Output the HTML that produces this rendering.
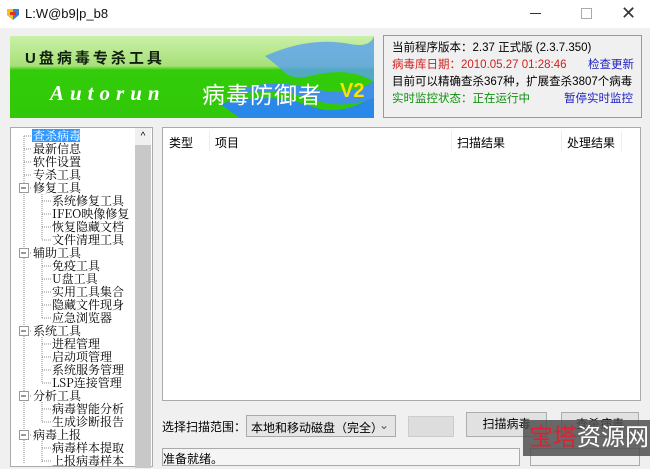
<!DOCTYPE html>
<html><head><meta charset="utf-8"><style>
*{margin:0;padding:0;box-sizing:border-box}
body{width:650px;height:463px;overflow:hidden;background:#f0f0f0;font-family:"Liberation Sans","Noto Sans CJK SC",sans-serif;font-size:12px;position:relative;color:#000}
.a{position:absolute}
.title{left:0;top:0;width:650px;height:28px;background:#fff}
.tree div{position:absolute;white-space:nowrap;font-family:"Noto Serif CJK SC","Noto Sans CJK SC",serif;font-size:12px;line-height:13px}
</style></head><body>
<div class="a title">
 <svg class="a" style="left:6px;top:7px" width="14" height="14"><path d="M1 2h12v6l-6 5-6-5z" fill="#3a7ad8"/><path d="M1 2h6v11l-6-5z" fill="#f0c020"/><path d="M4 5h6v3H4z" fill="#e03020"/></svg>
 <div class="a" style="left:25px;top:6px;font-size:13px;color:#111">L:W@b9|p_b8</div>
 <div class="a" style="left:530px;top:13px;width:11px;height:1px;background:#333"></div>
 <div class="a" style="left:581px;top:8px;width:11px;height:11px;border:1px solid #aaa"></div>
 <div class="a" style="left:621px;top:3px;font-size:18px;color:#333">✕</div>
</div>
<div class="a" style="left:10px;top:36px;width:364px;height:82px;overflow:hidden;background:linear-gradient(#c9f0a8 0,#a8e078 30px,#33cc0a 34px,#30c808 82px)">
 <svg class="a" style="left:0;top:0" width="364" height="82"><path d="M255 20 Q300 0 340 8 Q360 12 364 0 V46 Q340 30 300 40 Q280 45 270 32z" fill="#5aa0f0" opacity=".8"/><path d="M210 68 Q260 55 300 70 Q330 82 364 60 V82 H230z" fill="#2a88e8"/><path d="M220 60 Q250 40 300 52 Q340 62 364 45 V62 Q330 75 300 62 Q260 50 220 60z" fill="#4090e8"/></svg>
 <div class="a" style="left:15px;top:11px;font-size:15px;font-weight:bold;letter-spacing:3px;color:#102010">U盘病毒专杀工具</div>
 <div class="a" style="left:40px;top:45px;font-size:21px;font-weight:bold;font-style:italic;color:#fff;letter-spacing:6px;font-family:'Liberation Serif',serif">Autorun</div>
 <div class="a" style="left:192px;top:40px;font-size:23px;color:#fff;letter-spacing:1px">病毒防御者</div>
 <div class="a" style="left:330px;top:44px;font-size:20px;font-weight:bold;color:#ffe000">V2</div>
</div>
<div class="a" style="left:383px;top:35px;width:259px;height:83px;border:1px solid #999;background:#f0f0f0;font-size:11.5px;line-height:17px;padding:4px 0 0 8px">
 <div>当前程序版本：2.37 正式版 (2.3.7.350)</div>
 <div style="color:#d02020">病毒库日期：2010.05.27 01:28:46 <span style="color:#2020c0;position:absolute;left:204px">检查更新</span></div>
 <div>目前可以精确查杀367种，扩展查杀3807个病毒</div>
 <div style="color:#109010">实时监控状态：正在运行中 <span style="color:#2020c0;position:absolute;left:180px">暂停实时监控</span></div>
</div>
<div class="a" style="left:10px;top:127px;width:143px;height:340px;background:#fff;border:1px solid #aaa"></div>
<div class="a" style="left:135px;top:128px;width:16px;height:340px;background:#c8c8c8"></div>
<div class="a" style="left:135px;top:128px;width:16px;height:17px;background:#f0f0f0;text-align:center;font-size:10px;line-height:17px">^</div>
<div class="a" style="left:32px;top:129px;width:48px;height:13px;background:#3399ff"></div>
<div class="tree a" style="left:0;top:0">
<div style="left:33px;top:129px;color:#fff">查杀病毒</div>
<div style="left:33px;top:142px">最新信息</div>
<div style="left:33px;top:155px">软件设置</div>
<div style="left:33px;top:168px">专杀工具</div>
<div style="left:33px;top:181px">修复工具</div>
<div style="left:52px;top:194px">系统修复工具</div>
<div style="left:52px;top:207px">IFEO映像修复</div>
<div style="left:52px;top:220px">恢复隐藏文档</div>
<div style="left:52px;top:233px">文件清理工具</div>
<div style="left:33px;top:246px">辅助工具</div>
<div style="left:52px;top:259px">免疫工具</div>
<div style="left:52px;top:272px">U盘工具</div>
<div style="left:52px;top:285px">实用工具集合</div>
<div style="left:52px;top:298px">隐藏文件现身</div>
<div style="left:52px;top:311px">应急浏览器</div>
<div style="left:33px;top:324px">系统工具</div>
<div style="left:52px;top:337px">进程管理</div>
<div style="left:52px;top:350px">启动项管理</div>
<div style="left:52px;top:363px">系统服务管理</div>
<div style="left:52px;top:376px">LSP连接管理</div>
<div style="left:33px;top:389px">分析工具</div>
<div style="left:52px;top:402px">病毒智能分析</div>
<div style="left:52px;top:415px">生成诊断报告</div>
<div style="left:33px;top:428px">病毒上报</div>
<div style="left:52px;top:441px">病毒样本提取</div>
<div style="left:52px;top:454px">上报病毒样本</div>
</div>
<svg class="a" style="left:0;top:0" width="160" height="463">
<g stroke="#888" stroke-dasharray="1,1" fill="none">
<path d="M24 136V463M24 136h8M24 149h8M24 162h8M24 175h8M24 188h8M24 253h8M24 331h8M24 396h8M24 435h8"/>
<path d="M42 194V240M42 201h9M42 214h9M42 227h9M42 240h9"/>
<path d="M42 259V318M42 266h9M42 279h9M42 292h9M42 305h9M42 318h9"/>
<path d="M42 337V383M42 344h9M42 357h9M42 370h9M42 383h9"/>
<path d="M42 402V422M42 409h9M42 422h9"/>
<path d="M42 441V463M42 448h9M42 461h9"/>
</g>
<g fill="#fff" stroke="#999"><rect x="19.5" y="183.5" width="9" height="9"/><rect x="19.5" y="248.5" width="9" height="9"/><rect x="19.5" y="326.5" width="9" height="9"/><rect x="19.5" y="391.5" width="9" height="9"/><rect x="19.5" y="430.5" width="9" height="9"/></g>
<g stroke="#333"><path d="M21 188h5M21 253h5M21 331h5M21 396h5M21 435h5"/></g>
</svg>
<div class="a" style="left:162px;top:127px;width:479px;height:274px;background:#fff;border:1px solid #aaa"></div>
<div class="a" style="left:169px;top:134px">类型</div>
<div class="a" style="left:209px;top:131px;width:1px;height:20px;background:#eee"></div>
<div class="a" style="left:215px;top:134px">项目</div>
<div class="a" style="left:451px;top:131px;width:1px;height:20px;background:#eee"></div>
<div class="a" style="left:457px;top:134px">扫描结果</div>
<div class="a" style="left:561px;top:131px;width:1px;height:20px;background:#eee"></div>
<div class="a" style="left:567px;top:134px">处理结果</div>
<div class="a" style="left:621px;top:131px;width:1px;height:20px;background:#eee"></div>
<div class="a" style="left:162px;top:418px">选择扫描范围：</div>
<div class="a" style="left:246px;top:415px;width:150px;height:22px;background:#e5e5e5;border:1px solid #aaa;padding:3px 0 0 4px">本地和移动磁盘（完全）<span style="position:absolute;right:6px;top:2px;color:#555">⌄</span></div>
<div class="a" style="left:408px;top:416px;width:46px;height:21px;background:#ddd;border:1px solid #ccc"></div>
<div class="a" style="left:466px;top:412px;width:81px;height:25px;background:#e1e1e1;border:1px solid #adadad;text-align:center;line-height:23px">扫描病毒</div>
<div class="a" style="left:561px;top:412px;width:78px;height:25px;background:#e1e1e1;border:1px solid #adadad;text-align:center;line-height:23px">查杀病毒</div>
<div class="a" style="left:162px;top:448px;width:358px;height:18px;background:#f5f5f5;border:1px solid #aaa;padding:1px 0 0 0">准备就绪。</div>
<div class="a" style="left:530px;top:448px;width:110px;height:18px;border:1px solid #aaa"></div>
<div class="a" style="left:523px;top:420px;width:127px;height:36px;background:rgba(80,80,80,.85);font-size:24px;line-height:36px;padding-left:6px;color:#fff"><span style="color:#e02030">宝塔</span>资源网</div>
</body></html>
